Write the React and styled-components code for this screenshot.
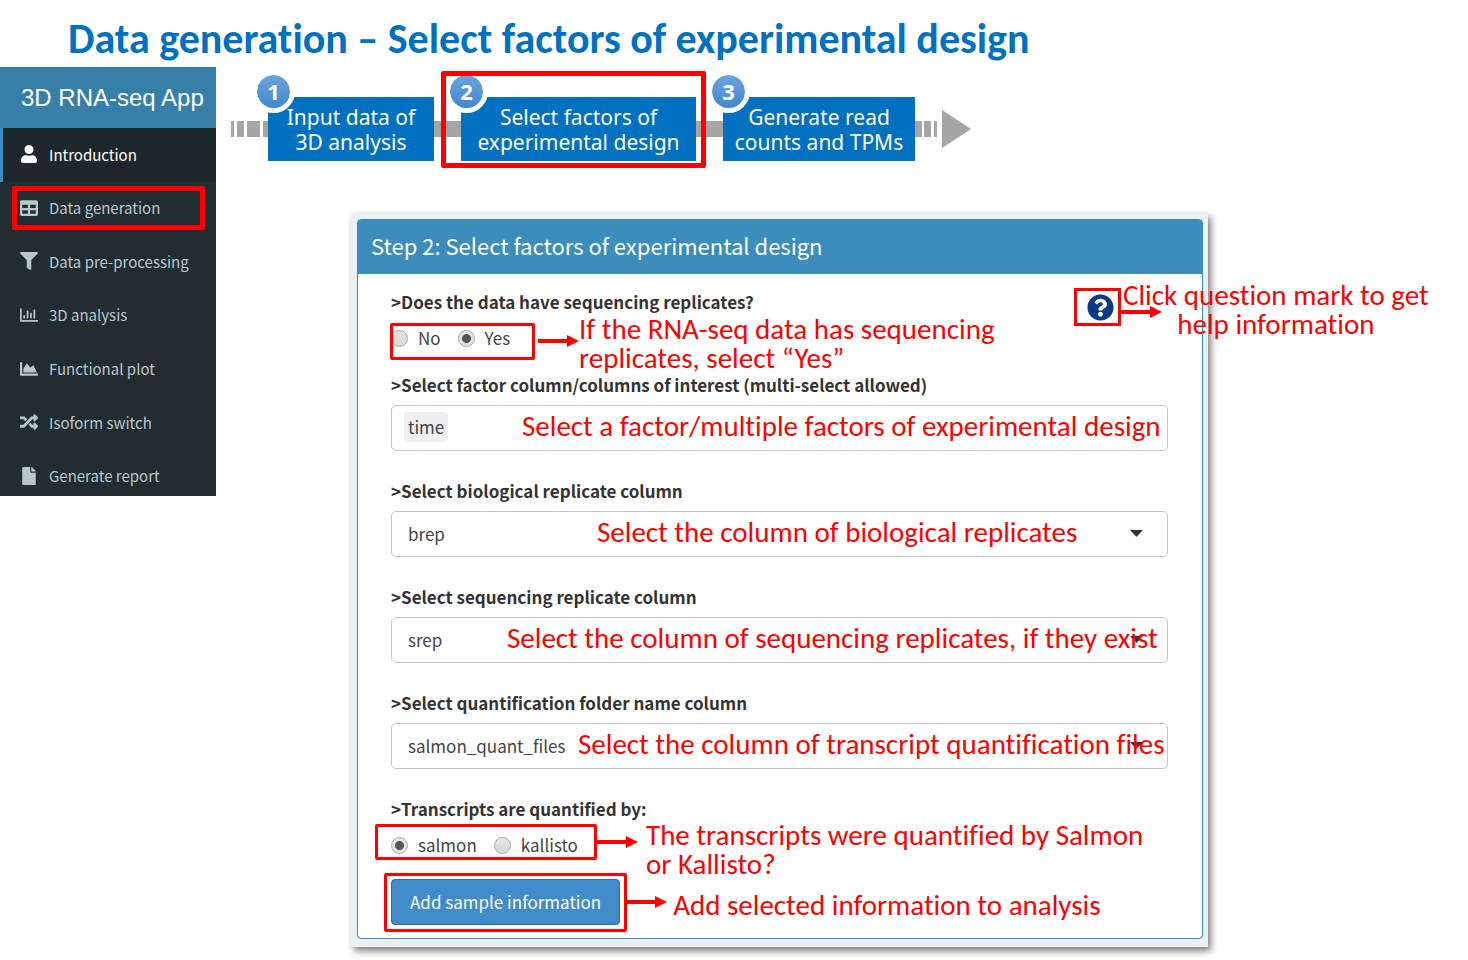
import React, { useState } from 'react';
import styled, { createGlobalStyle, css } from 'styled-components';
import {
  FaUser,
  FaTable,
  FaFilter,
  FaRegChartBar,
  FaChartArea,
  FaRandom,
  FaFile,
  FaQuestionCircle,
} from 'react-icons/fa';

const RED = '#ff0000';
const slideFont = 'Carlito, Calibri, Lato, sans-serif';
const appFont = "'Noto Sans CJK SC', 'Noto Sans', sans-serif";

const GlobalStyle = createGlobalStyle`
  *, *::before, *::after { box-sizing: border-box; }
  body { margin: 0; background: #fff; overflow-x: hidden; }
  button, input, select { font: inherit; color: inherit; }
`;

const Title = styled.h1`
  margin: 0;
  padding: 13px 68px 2px;
  font: 700 42px/52px ${slideFont};
  font-variant-ligatures: none;
  color: #0070c0;
`;

const Layout = styled.div`
  display: flex;
  align-items: flex-start;
`;

/* Sidebar */

const Sidebar = styled.aside`
  flex: none;
  width: 216px;
  background: #222d32;
  font-family: ${appFont};
  overflow: hidden;
`;

const Brand = styled.div`
  padding-left: 21px;
  background: #367fa9;
  color: #fff;
  font: 24px/61px 'Liberation Sans', Arial, sans-serif;
  white-space: nowrap;
`;

const Menu = styled.ul`
  display: grid;
  grid-auto-rows: 1fr;
  min-height: 375px;
  margin: 0 0 -7px;
  padding: 0;
  list-style: none;
`;

const MenuItem = styled.li`
  position: relative;
  display: grid;
`;

const MenuLink = styled.a`
  display: flex;
  align-items: center;
  gap: 10px;
  padding: 0 0 1px 17px;
  border-left: 3px solid ${(p) => (p.$active ? '#3c8dbc' : 'transparent')};
  background: ${(p) => (p.$active ? '#1e282c' : 'transparent')};
  color: ${(p) => (p.$active ? '#fff' : '#b8c7ce')};
  font-size: 15px;
  text-decoration: none;
`;

const IconSlot = styled.span`
  display: flex;
  width: 19px;

  svg { width: auto; height: 18px; }
`;

/* Red annotations laid over the interface */

const Outline = styled.span`
  position: absolute;
  inset: ${(p) => p.$inset};
  border: ${(p) => p.$weight || 3}px solid ${RED};
  border-radius: 2px;
  pointer-events: none;
  z-index: 2;
`;

const Note = styled.p`
  margin: 0;
  color: ${RED};
  font: 29px/29px ${slideFont};
  font-variant-ligatures: none;
  white-space: nowrap;
  pointer-events: none;
`;

const ArrowSvg = styled.svg`
  flex: none;
  display: block;
`;

function Arrow() {
  return (
    <ArrowSvg width="41" height="12" aria-hidden="true">
      <path d="M0 4h29V0l12 6-12 6V8H0z" fill={RED} />
    </ArrowSvg>
  );
}

/* Process strip */

const Main = styled.main`
  flex: 1;
  min-width: 0;
`;

const Process = styled.ol`
  display: flex;
  align-items: center;
  margin: 0;
  padding: 30px 0 0 15px;
  list-style: none;
`;

const StepBox = styled.li`
  position: relative;
  flex: none;
  width: ${(p) => p.$width}px;
  padding: 8px 0 6px;
  background: #0070c0;
  color: #fff;
  font: 21px/25px 'Noto Sans', sans-serif;
  text-align: center;
  white-space: nowrap;
`;

const StepNumber = styled.span`
  position: absolute;
  left: -16px;
  top: -27px;
  width: 43px;
  height: 43px;
  border: 5px solid #fff;
  border-radius: 50%;
  background: linear-gradient(#6ba3dc, #4189d0) padding-box;
  font-weight: 700;
  font-size: 22px;
  line-height: 32px;
`;

const Connector = styled.li`
  flex: 0 0 27px;
  height: 16px;
  background: #a5a5a5;
`;

const TrackEnd = styled.li`
  display: flex;
`;

/* Panel */

const PanelFrame = styled.section`
  margin: 52px 260px 13px 135px;
  padding: 6px 5px 8px 6px;
  background: #ecf0f5;
  box-shadow: 3px 4px 7px rgba(0, 0, 0, 0.5);
  font-family: ${appFont};
`;

const Card = styled.div`
  border: 1px solid #3c8dbc;
  border-radius: 4px;
  background: #fff;
`;

const CardHeader = styled.h2`
  margin: 0;
  padding: 0 0 4px 13px;
  background: #3c8dbc;
  color: #fff;
  font-weight: 400;
  font-size: 22px;
  line-height: 50px;
`;

const Form = styled.form`
  position: relative;
  padding: 15px 34px 13px 33px;
  color: #444;
  font-size: 17px;
`;

const Group = styled.div`
  margin: 0 0 ${(p) => (p.$tight ? 22 : 27)}px;
`;

const labelStyle = css`
  display: block;
  margin: 0;
  padding: 0;
  color: #333;
  font-weight: 700;
  font-size: 17px;
  line-height: 26px;
`;

const Label = styled.label`
  ${labelStyle}
  margin-bottom: 7px;
`;

const RadioSet = styled.fieldset`
  min-width: 0;
  margin: 0;
  padding: 0;
  border: 0;
`;

const Legend = styled.legend`
  ${labelStyle}
`;

const AnswerRow = styled.div`
  display: flex;
  align-items: flex-start;
  height: 24px;
  margin-top: 11px;
`;

const RadioGroup = styled.div`
  position: relative;
  display: flex;
  flex: none;
  gap: 17px;
  width: ${(p) => p.$width}px;
  line-height: 24px;
`;

const Pointer = styled.div`
  display: flex;
  gap: ${(p) => p.$gap}px;
  margin-top: ${(p) => (p.$low ? 9 : 3)}px;

  ${Note} { margin-top: ${(p) => (p.$low ? -20 : -15)}px; }
`;

const RadioLabel = styled.label`
  display: flex;
  align-items: center;
  gap: 10px;
`;

const Radio = styled.input`
  appearance: none;
  width: 17px;
  height: 17px;
  margin: 0;
  border: 1px solid #a8a8a8;
  border-radius: 50%;
  background: linear-gradient(#e4e4e4, #d8d8d8);

  &:checked {
    background: radial-gradient(circle, #555 0 4px, #e4e4e4 5px);
  }
`;

const Control = styled.div`
  display: grid;
  align-items: center;

  > * { grid-area: 1 / 1; }
`;

const FieldNote = styled(Note)`
  z-index: 1;
  padding: 0 0 3px ${(p) => p.$indent}px;
`;

const fieldStyle = css`
  width: 100%;
  height: 46px;
  border: 1px solid #c6c6c6;
  border-radius: 5px;
  background: #fff;
`;

const Select = styled.select`
  ${fieldStyle}
  appearance: none;
  padding: 0 40px 2px 16px;
`;

const Caret = styled.svg`
  justify-self: end;
  margin: 0 25px 2px 0;
  pointer-events: none;
`;

const TagField = styled.div`
  ${fieldStyle}
  display: flex;
  align-items: center;
  gap: 6px;
  padding: 0 12px 2px;
`;

const Tag = styled.span`
  padding: 0 4px 1px;
  border-radius: 4px;
  background: #efefef;
  line-height: 29px;
`;

const TagInput = styled.input`
  flex: 1;
  min-width: 0;
  border: 0;
  outline: 0;
  background: transparent;
`;

const HelpSpot = styled.div`
  position: absolute;
  right: 40px;
  top: 14px;
  display: flex;
  align-items: center;
`;

const HelpButton = styled.button`
  display: flex;
  align-items: center;
  justify-content: center;
  width: 47px;
  height: 38px;
  margin-bottom: 10px;
  padding: 0 0 0 6px;
  border: 3px solid ${RED};
  background: transparent;
  color: #0a3a87;

  svg { width: 27px; height: 27px; }
`;

const HelpNote = styled(Note)`
  position: absolute;
  left: 49px;
  top: -7px;
  text-align: center;
`;

const ActionRow = styled.div`
  display: flex;
  align-items: center;
  gap: 6px;
`;

const ButtonSpot = styled.div`
  position: relative;
`;

const SubmitButton = styled.button`
  display: block;
  height: 46px;
  padding: 0 18px 2px;
  border: 1px solid #2e6da4;
  border-radius: 4px;
  background: #428bca;
  color: #fff;
`;

const ActionNote = styled(Note)`
  padding-top: 6px;
`;

const menu = [
  ['Introduction', FaUser],
  ['Data generation', FaTable],
  ['Data pre-processing', FaFilter],
  ['3D analysis', FaRegChartBar],
  ['Functional plot', FaChartArea],
  ['Isoform switch', FaRandom],
  ['Generate report', FaFile],
];

const selects = [
  { id: 'brep', label: '>Select biological replicate column', value: 'brep', note: 'Select the column of biological replicates', indent: 206 },
  { id: 'srep', label: '>Select sequencing replicate column', value: 'srep', note: 'Select the column of sequencing replicates, if they exist', indent: 116 },
  { id: 'quant', label: '>Select quantification folder name column', value: 'salmon_quant_files', note: 'Select the column of transcript quantification files', indent: 187 },
];

function RadioQuestion({ name, legend, options, initial, width, inset, gap, low, note }) {
  const [value, setValue] = useState(initial);
  return (
    <Group $tight>
      <RadioSet>
        <Legend>{legend}</Legend>
        <AnswerRow>
          <RadioGroup $width={width}>
            {options.map((o) => (
              <RadioLabel key={o}>
                <Radio type="radio" name={name} value={o} checked={value === o} onChange={() => setValue(o)} />
                {o}
              </RadioLabel>
            ))}
            <Outline $inset={inset} />
          </RadioGroup>
          <Pointer $gap={gap} $low={low}>
            <Arrow />
            <Note>
              {note[0]}
              <br />
              {note[1]}
            </Note>
          </Pointer>
        </AnswerRow>
      </RadioSet>
    </Group>
  );
}

export default function App() {
  return (
    <>
      <GlobalStyle />
      <Title>Data generation – Select factors of experimental design</Title>
      <Layout>
        <Sidebar>
          <Brand>3D RNA-seq App</Brand>
          <nav>
            <Menu>
              {menu.map(([text, Icon], i) => (
                <MenuItem key={text}>
                  <MenuLink href="#" $active={i === 0}>
                    <IconSlot>
                      <Icon aria-hidden="true" />
                    </IconSlot>
                    {text}
                  </MenuLink>
                  {i === 1 && <Outline $inset="4px 11px 5px 12px" $weight={5} />}
                </MenuItem>
              ))}
            </Menu>
          </nav>
        </Sidebar>

        <Main>
          <Process>
            <TrackEnd aria-hidden="true">
              <svg width="37" height="16" fill="#a5a5a5">
                <path d="M0 0h3v16H0zM6 0h7v16H6zM16 0h13v16H16zM32 0h5v16h-5z" />
              </svg>
            </TrackEnd>
            <StepBox $width={166}>
              <StepNumber>1</StepNumber>
              Input data of
              <br />
              3D analysis
            </StepBox>
            <Connector aria-hidden="true" />
            <StepBox $width={235}>
              <StepNumber>2</StepNumber>
              Select factors of
              <br />
              experimental design
              <Outline $inset="-26px -10px -7px -20px" $weight={5} />
            </StepBox>
            <Connector aria-hidden="true" />
            <StepBox $width={192}>
              <StepNumber>3</StepNumber>
              Generate read
              <br />
              counts and TPMs
            </StepBox>
            <TrackEnd aria-hidden="true">
              <svg width="56" height="38" fill="#a5a5a5">
                <path d="M0 11h7v16H0zM9 11h7v16H9zM19 11h3v16h-3zM27 0l29 19-29 19z" />
              </svg>
            </TrackEnd>
          </Process>

          <PanelFrame>
            <Card>
              <CardHeader>Step 2: Select factors of experimental design</CardHeader>
              <Form onSubmit={(e) => e.preventDefault()}>
                <RadioQuestion
                  name="replicates"
                  legend=">Does the data have sequencing replicates?"
                  options={['No', 'Yes']}
                  initial="Yes"
                  width={147}
                  inset="-3px 3px -10px -1px"
                  gap={-2}
                  low
                  note={['If the RNA-seq data has sequencing', 'replicates, select “Yes”']}
                />

                <Group>
                  <Label htmlFor="factors">&gt;Select factor column/columns of interest (multi-select allowed)</Label>
                  <Control>
                    <TagField>
                      <Tag>time</Tag>
                      <TagInput id="factors" type="text" />
                    </TagField>
                    <FieldNote $indent={131}>Select a factor/multiple factors of experimental design</FieldNote>
                  </Control>
                </Group>

                {selects.map((s) => (
                  <Group key={s.id}>
                    <Label htmlFor={s.id}>{s.label}</Label>
                    <Control>
                      <Select id={s.id} defaultValue={s.value}>
                        <option>{s.value}</option>
                      </Select>
                      <Caret width="13" height="7" aria-hidden="true">
                        <path d="M0 0h13L6.500 7z" fill="#333" />
                      </Caret>
                      <FieldNote $indent={s.indent}>{s.note}</FieldNote>
                    </Control>
                  </Group>
                ))}

                <RadioQuestion
                  name="tool"
                  legend=">Transcripts are quantified by:"
                  options={['salmon', 'kallisto']}
                  initial="salmon"
                  width={206}
                  inset="-9px 0 -3px -16px"
                  gap={8}
                  note={['The transcripts were quantified by Salmon', 'or Kallisto?']}
                />

                <ActionRow>
                  <ButtonSpot>
                    <SubmitButton type="submit">Add sample information</SubmitButton>
                    <Outline $inset="-6px -7px -7px" />
                  </ButtonSpot>
                  <Arrow />
                  <ActionNote>Add selected information to analysis</ActionNote>
                </ActionRow>

                <HelpSpot>
                  <HelpButton type="button" aria-label="Help">
                    <FaQuestionCircle aria-hidden="true" />
                  </HelpButton>
                  <Arrow />
                  <HelpNote>
                    Click question mark to get
                    <br />
                    help information
                  </HelpNote>
                </HelpSpot>
              </Form>
            </Card>
          </PanelFrame>
        </Main>
      </Layout>
    </>
  );
}
